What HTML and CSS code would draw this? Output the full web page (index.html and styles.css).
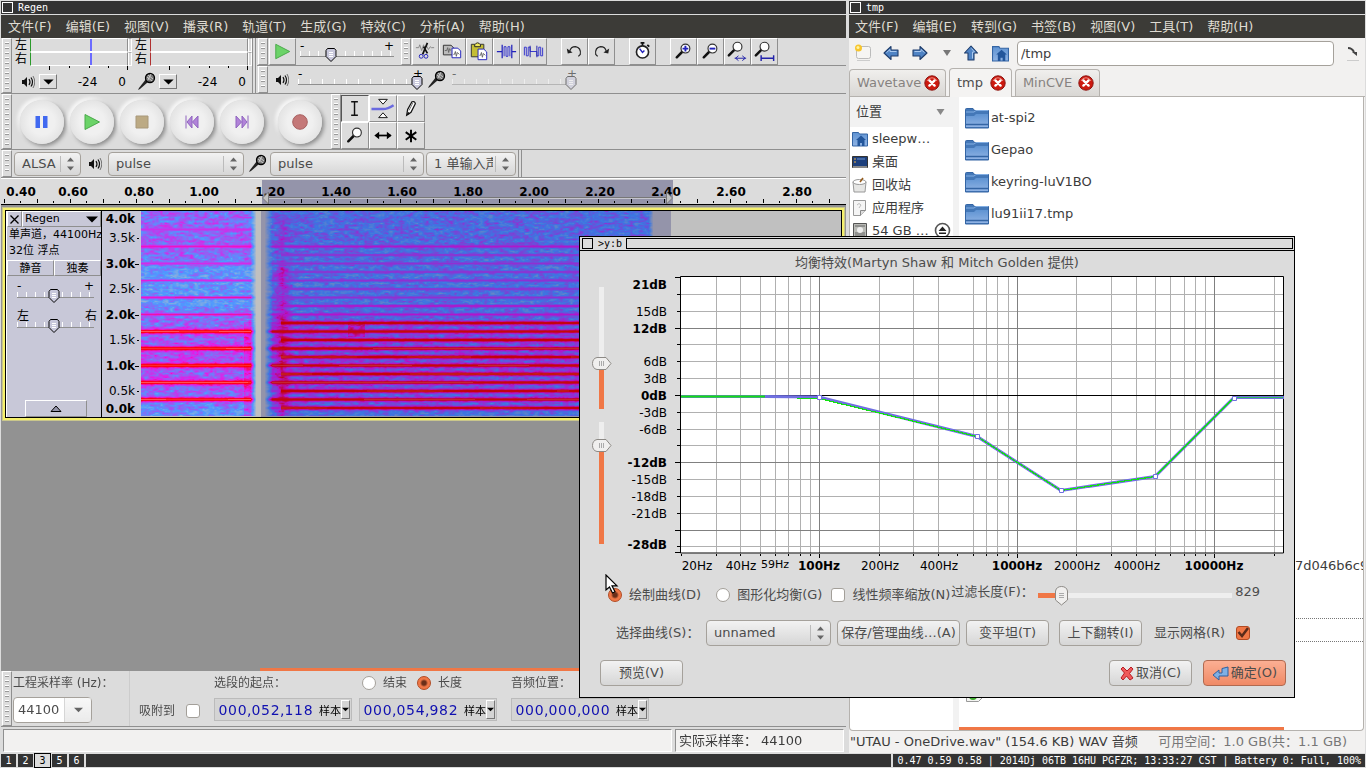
FILE: index.html
```html
<!DOCTYPE html>
<html lang="zh-CN">
<head>
<meta charset="utf-8">
<title>Regen</title>
<link rel="stylesheet" href="styles.css">
</head>
<body>
<svg class="defs" aria-hidden="true">
  <defs>
    <linearGradient id="blue" x1="0" y1="0" x2="0" y2="1"><stop offset="0" stop-color="#5f93d2"/><stop offset="1" stop-color="#8fb3e4"/></linearGradient>
    <symbol id="i-speaker" viewBox="0 0 14 14"><path d="M1 5h2l3-3v10l-3-3H1z" fill="#111"/><path d="M8 4q2 3 0 6M10 2.500q3 4.500 0 9" fill="none" stroke="#111" stroke-width="1.200"/><path d="M12 1q3.500 6 0 12" fill="none" stroke="#555" stroke-width=".8"/></symbol>
    <symbol id="i-mic" viewBox="0 0 20 20"><path d="M2 18l2-1 8-7-2-3-7 9z" fill="#222"/><circle cx="14" cy="6" r="4.500" fill="#777" stroke="#000" stroke-width="1.300"/><path d="M11 5l5 4M12 3l5 4M12 8l3-6" stroke="#ddd" stroke-width=".8"/></symbol>
    <symbol id="i-lens" viewBox="0 0 22 22"><path d="M3 16l6-6" stroke="#111" stroke-width="2.600" stroke-linecap="round"/><circle cx="12" cy="7" r="4.600" fill="#fff" stroke="#333" stroke-width="1.200"/></symbol>
    <symbol id="i-folder" viewBox="0 0 24 21"><path d="M.5 1.500Q.5.500 1.500.5H8l1.500 2H23.500v17.500H.5z" fill="#4478b8" stroke="#3465a4"/><path d="M1 4h8l2-1.500h12" stroke="#82aee3" fill="none"/><path d="M1 8h8l2-2h12v13H1z" fill="url(#blue)"/><path d="M1 16.500h22" stroke="#3465a4" stroke-width="1.500"/></symbol>
    <symbol id="i-home" viewBox="0 0 16 16"><path d="M.5 1.500h6l1 1.500h8v12H.5z" fill="url(#blue)" stroke="#3465a4"/><path d="M4 9l5-4.500L14 9h-1.500v6h-2.500v-3h-2v3H5.500V9z" fill="#23569b"/></symbol>
    <symbol id="i-arrow" viewBox="0 0 16 16"><path d="M1 8l7-6.500V5h7v6H8v3.500z" fill="#4f83c4" stroke="#1f3d6c" stroke-width="1.100" stroke-linejoin="round"/><path d="M3.500 7.500l3.500-3v2h6.500" fill="none" stroke="#a9c8ee"/></symbol>
    <symbol id="i-close" viewBox="0 0 16 16"><circle cx="8" cy="8" r="7.200" fill="#cc1a10" stroke="#8d1410"/><path d="M3 6a5.500 5.500 0 0 1 10 0" fill="none" stroke="#ef8a80"/><path d="M5.400 5.400l5.200 5.200M10.600 5.400l-5.200 5.200" stroke="#fff" stroke-width="2.400" stroke-linecap="round"/></symbol>
    <symbol id="i-down" viewBox="0 0 12 7"><path d="M0 .5h12L6 6.500z" fill="#000"/></symbol>
    <symbol id="i-undo" viewBox="0 0 26 26"><path d="M8 13q1-5 6-5 6 1 5 8l-2 2" fill="none" stroke="#222" stroke-width="1.200"/><path d="M5 10l1 5 5-1z" fill="#222"/></symbol>
  </defs>
</svg>

<div class="desktop">
 <div class="windows">
  <section class="win audacity">
    <header class="titlebar"><i class="box"></i><span>Regen</span></header>
    <nav class="menubar"><a href="#">文件(F)</a><a href="#">编辑(E)</a><a href="#">视图(V)</a><a href="#">播录(R)</a><a href="#">轨道(T)</a><a href="#">生成(G)</a><a href="#">特效(C)</a><a href="#">分析(A)</a><a href="#">帮助(H)</a></nav>

    <div class="dock">
      <div class="meters">
        <i class="grip"></i>
        <div class="meter">
          <div class="channel"><span>左</span><b class="bar out"></b><i class="clip"></i></div>
          <div class="channel"><span>右</span><b class="bar out"></b><i class="clip"></i></div>
          <svg class="scale" viewBox="0 0 120 4"><path d="M37.500 0v4M57.500 0v2M77.500 0v2M96.500 0v2M115.500 0v4" stroke="#000"/></svg>
          <div class="meter-foot"><svg width="14" height="14"><use href="#i-speaker"/></svg><button class="drop" aria-label="播放表"><svg width="11" height="6"><use href="#i-down"/></svg></button><span class="mid">-24</span><span>0</span></div>
        </div>
        <div class="meter">
          <div class="channel"><span>左</span><b class="bar in"></b><i class="clip"></i></div>
          <div class="channel"><span>右</span><b class="bar in"></b><i class="clip"></i></div>
          <svg class="scale" viewBox="0 0 120 4"><path d="M37.500 0v4M57.500 0v2M77.500 0v2M96.500 0v2M115.500 0v4" stroke="#000"/></svg>
          <div class="meter-foot"><svg width="20" height="20"><use href="#i-mic"/></svg><button class="drop" aria-label="录音表"><svg width="11" height="6"><use href="#i-down"/></svg></button><span class="mid">-24</span><span>0</span></div>
        </div>
        <i class="endbar"></i>
      </div>
      <div class="dock-rows">
        <div class="bar-row">
          <i class="grip"></i>
          <button class="tool" aria-label="按速度播放"><svg viewBox="0 0 26 26"><path d="M6 5.500v15L20.500 13z" fill="#6bd368" stroke="#4aa94a"/></svg></button>
          <div class="knob speed"><span class="signs"><i>-</i><i>+</i></span><input type="range" aria-label="播放速度" value="30"></div>
          <i class="grip"></i>
          <button class="tool" aria-label="剪切"><svg viewBox="0 0 26 26"><path d="M3 9h3l1-3 2 6 2-6 1 4 2-3 2 4 2-3 1 1h3" fill="none" stroke="#888"/><path d="M15 4l-5 12M11 8l4 7" stroke="#111" stroke-width="1.800"/><circle cx="8.500" cy="18" r="2" fill="none" stroke="#22b"/><circle cx="13.500" cy="18" r="2" fill="none" stroke="#22b"/></svg></button>
          <button class="tool" aria-label="复制"><svg viewBox="0 0 26 26"><path d="M3.500 6.500h8l3 3v7h-11z" fill="#bbb" stroke="#333"/><path d="M5 12h2l1-3 1 5 1-4 1 2" fill="none" stroke="#666"/><path d="M12.500 9.500h6l3 3v7h-9z" fill="#fff" stroke="#22b"/><path d="M14 16h1l1-3 1 5 1-4 2 2" fill="none" stroke="#666"/></svg></button>
          <button class="tool" aria-label="粘贴"><svg viewBox="0 0 26 26"><path d="M4.500 5.500h13v13h-13z" fill="#c3bd35" stroke="#333"/><path d="M8 6q3-4 6 0v2H8z" fill="#efe75c" stroke="#222"/><path d="M11.500 10.500h6l3 3v8h-9z" fill="#fff" stroke="#22b"/><path d="M13 17h1l1-3 1 5 1-4 2 2" fill="none" stroke="#666"/></svg></button>
          <button class="tool" aria-label="修剪"><svg viewBox="0 0 26 26"><path d="M3 13h5M18 13h5M8.500 6v14M18.500 6v14" stroke="#22b" stroke-width="1.300"/><path d="M10.500 18V8h2v10h2V8h2v10" fill="none" stroke="#33c"/></svg></button>
          <button class="tool" aria-label="静音"><svg viewBox="0 0 26 26"><path d="M3.500 17V8.500h2v9h2v-9h2V13H16.500V17.500h2v-9h2v9h2V9" fill="none" stroke="#33c"/><path d="M9.500 7v12M16.500 7v12" stroke="#22a"/></svg></button>
          <i class="gap"></i>
          <button class="tool" aria-label="撤销"><svg viewBox="0 0 26 26"><use href="#i-undo"/></svg></button>
          <button class="tool" aria-label="重做"><svg viewBox="0 0 26 26" class="flip"><use href="#i-undo"/></svg></button>
          <i class="gap"></i>
          <button class="tool" aria-label="定时"><svg viewBox="0 0 26 26"><path d="M11 4h4M13 4v4M18 6l2 2" stroke="#111" stroke-width="1.800"/><circle cx="13" cy="13.500" r="6.300" fill="#fff" stroke="#222" stroke-width="1.700"/><path d="M10 10l3 4 2-2" fill="none" stroke="#22b" stroke-width="1.500"/></svg></button>
          <i class="gap"></i>
          <button class="tool" aria-label="放大"><svg viewBox="0 0 26 26"><use href="#i-lens" x="3" y="3" width="22" height="22"/><path d="M12 10h6M15 7v6" stroke="#22b" stroke-width="2"/></svg></button>
          <button class="tool" aria-label="缩小"><svg viewBox="0 0 26 26"><use href="#i-lens" x="3" y="3" width="22" height="22"/><path d="M12 10h6" stroke="#22b" stroke-width="2"/></svg></button>
          <button class="tool" aria-label="适应选区"><svg viewBox="0 0 26 26"><use href="#i-lens" x="1" y="1" width="22" height="22"/><path d="M10 20h12M14 17.500l-3 2.500 3 2.500M18 17.500l3 2.500-3 2.500" fill="none" stroke="#22a"/></svg></button>
          <button class="tool" aria-label="适应项目"><svg viewBox="0 0 26 26"><use href="#i-lens" x="1" y="1" width="22" height="22"/><path d="M10 20h12M9.500 17v6M22.500 17v6" stroke="#22a" stroke-width="1.500"/></svg></button>
        </div>
        <div class="bar-row mixer">
          <i class="grip"></i>
          <svg width="14" height="14"><use href="#i-speaker"/></svg>
          <div class="knob wide"><span class="signs"><i>-</i><i>+</i></span><input type="range" aria-label="输出音量" value="100"></div>
          <svg width="20" height="20"><use href="#i-mic"/></svg>
          <div class="knob wide off"><span class="signs"><i>-</i><i>+</i></span><input type="range" aria-label="输入音量" value="100" disabled></div>
        </div>
      </div>
    </div>

    <div class="bar-row transport">
      <i class="grip"></i>
      <div class="rounds">
        <button class="round" aria-label="暂停"><svg viewBox="0 0 16 16"><path d="M1.500 2h4.500v12H1.500zM9 2h4.500v12H9z" fill="#4169f0"/></svg></button>
        <button class="round" aria-label="播放"><svg viewBox="0 0 16 16"><path d="M1 .5v15L15.500 8z" fill="#6bd368" stroke="#4aa94a"/></svg></button>
        <button class="round" aria-label="停止"><svg viewBox="0 0 16 16"><path d="M2 2h12v12H2z" fill="#bcaa84" stroke="#a8987a"/></svg></button>
        <button class="round" aria-label="开头"><svg viewBox="0 0 16 16"><path d="M2 1.500v13M8 2v12L3 8zM14 2v12L8.500 8z" fill="#b183d8" stroke="#9065c0"/></svg></button>
        <button class="round" aria-label="结尾"><svg viewBox="0 0 16 16"><path d="M14 1.500v13M8 2v12l5-6zM2 2v12l5.500-6z" fill="#b183d8" stroke="#9065c0"/></svg></button>
        <button class="round rec" aria-label="录音"><svg viewBox="0 0 16 16"><circle cx="8" cy="8" r="7.300" fill="#c47878" stroke="#a86060"/></svg></button>
      </div>
      <i class="grip"></i>
      <div class="tools">
        <button class="tool on" aria-label="选择"><svg viewBox="0 0 26 26"><path d="M9 6h7M9 20h7M12.500 6v14" stroke="#111" stroke-width="1.500"/></svg></button>
        <button class="tool" aria-label="包络"><svg viewBox="0 0 26 26"><path d="M1 13.500h12q5 0 11-4" fill="none" stroke="#6a6ae0" stroke-width="2.500"/><path d="M8.500 3.500h9l-4.500 5zM8.500 22.500h9l-4.500-5z" fill="#fff" stroke="#111"/></svg></button>
        <button class="tool" aria-label="绘制"><svg viewBox="0 0 26 26"><path d="M8.500 20l1-6 4.500-8q3-1 3.500 2L13 17z" fill="#fff" stroke="#111" stroke-width="1.300"/><path d="M8 20.500l2-4 2 2z" fill="#111"/><path d="M15 7l-4 8" stroke="#777"/></svg></button>
        <button class="tool" aria-label="缩放"><svg viewBox="0 0 26 26"><use href="#i-lens" x="3" y="3" width="22" height="22"/></svg></button>
        <button class="tool" aria-label="时间移动"><svg viewBox="0 0 26 26"><path d="M6 13h15" stroke="#000" stroke-width="1.800"/><path d="M9 9v8l-5-4zM17 9v8l5-4z" fill="#000"/></svg></button>
        <button class="tool" aria-label="多用途"><svg viewBox="0 0 26 26"><path d="M13 7v13M7.500 9.500l11 8M18.500 9.500l-11 8" stroke="#000" stroke-width="2"/></svg></button>
      </div>
    </div>

    <div class="bar-row devices">
      <i class="grip"></i>
      <select class="sel host" aria-label="音频主机"><option>ALSA</option></select>
      <svg width="14" height="14"><use href="#i-speaker"/></svg>
      <select class="sel outdev" aria-label="输出设备"><option>pulse</option></select>
      <svg class="micro" width="20" height="20"><use href="#i-mic"/></svg>
      <select class="sel indev" aria-label="输入设备"><option>pulse</option></select>
      <select class="sel chans" aria-label="输入声道"><option>1 单输入声道</option></select>
      <i class="endbar"></i>
    </div>

    <div class="timeline">
      <svg width="840" height="26" viewBox="2 179 840 26">
        <path d="M262 180h411v25H262z" fill="#9494aa"/>
        <path d="M264 198.500h402" stroke="#c4c4cc"/><path d="M264 197.500h402" stroke="#777"/>
        <path id="minor" class="tk"/><path id="major" class="tk"/>
        <g class="tl"><text x="21" y="196">0.40</text><text x="73" y="196">0.60</text><text x="139" y="196">0.80</text><text x="204" y="196">1.00</text><text x="270" y="196">1.20</text><text x="336" y="196">1.40</text><text x="402" y="196">1.60</text><text x="468" y="196">1.80</text><text x="534" y="196">2.00</text><text x="600" y="196">2.20</text><text x="666" y="196">2.40</text><text x="731" y="196">2.60</text><text x="797" y="196">2.80</text></g>
        <path d="M268.500 192v12l-6-6zM666.500 192v12l6-6z" fill="#c0c0c0" stroke="#777"/>
      </svg>
    </div>

    <div class="tracks">
      <div class="track">
        <div class="panel">
          <div class="panel-head"><button aria-label="关闭轨道"><svg width="9" height="9" viewBox="0 0 9 9"><path d="M.5.500l8 8M8.500.500l-8 8" stroke="#000" stroke-width="1.300"/></svg></button><button class="name"><span>Regen</span><svg width="12" height="7"><use href="#i-down"/></svg></button></div>
          <p>单声道，44100Hz</p><p>32位 浮点</p>
          <div class="pair"><button>静音</button><button>独奏</button></div>
          <div class="knob track-knob"><span class="signs"><i>-</i><i>+</i></span><input type="range" aria-label="增益" value="48"></div>
          <div class="knob track-knob pan"><span class="signs"><i>左</i><i>右</i></span><input type="range" aria-label="声像" value="48"></div>
          <button class="collapse" aria-label="折叠"><svg width="12" height="7" viewBox="0 0 12 7"><path d="M1 6.500L6 1l5 5.500z" fill="#9494aa" stroke="#000"/></svg></button>
        </div>
        <svg class="freq" width="39" height="206" viewBox="102 211 39 206">
          <g class="fb"><text x="135" y="223">4.0k</text><text x="135" y="268">3.0k</text><text x="135" y="319">2.0k</text><text x="135" y="370">1.0k</text><text x="135" y="413">0.0k</text></g>
          <g class="fr"><text x="135" y="242">3.5k</text><text x="135" y="293">2.5k</text><text x="135" y="344">1.5k</text><text x="135" y="395">0.5k</text></g>
          <path class="tk" d="M137 238.500h2M135 264.500h4M137 289.500h2M135 315.500h4M137 340.500h2M135 366.500h4M137 391.500h2"/>
        </svg>
        <div class="wave"><canvas id="spectrum" width="530" height="206"></canvas></div>
      </div>
      <i class="hscroll"></i>
    </div>

    <div class="selection-bar">
      <i class="grip"></i>
      <div class="rate"><label for="rate">工程采样率 (Hz)：</label><div class="combo"><input id="rate" value="44100"><button aria-label="选择采样率"><svg width="9" height="6"><use href="#i-down"/></svg></button></div></div>
      <label class="snap">吸附到<input type="checkbox"></label>
      <div class="tcol"><span>选段的起点：</span><div class="time" data-v="000,052,118"></div></div>
      <div class="tcol"><span class="radios"><label><input type="radio" name="len">结束</label><label><input type="radio" name="len" checked>长度</label></span><div class="time" data-v="000,054,982"></div></div>
      <div class="tcol last"><span>音频位置：</span><div class="time" data-v="000,000,000"></div></div>
    </div>
    <footer class="status"><span class="cell"></span><span class="cell rate-cell">实际采样率： 44100</span></footer>
  </section>

  <section class="win files">
    <header class="titlebar"><i class="box"></i><span>tmp</span></header>
    <nav class="menubar"><a href="#">文件(F)</a><a href="#">编辑(E)</a><a href="#">转到(G)</a><a href="#">书签(B)</a><a href="#">视图(V)</a><a href="#">工具(T)</a><a href="#">帮助(H)</a></nav>
    <div class="fm-bar">
      <button aria-label="新标签"><svg width="18" height="18" viewBox="0 0 18 18"><rect x="2.500" y="2.500" width="14" height="12" rx="2" fill="#f6f5f3" stroke="#bbb"/><path d="M3 16.500h13" stroke="#ccc"/><circle cx="4.500" cy="4" r="3.500" fill="#f7c52d"/><circle cx="4" cy="3.500" r="1.500" fill="#fff3a0"/></svg></button>
      <button aria-label="后退"><svg width="16" height="16"><use href="#i-arrow"/></svg></button>
      <button aria-label="前进"><svg width="16" height="16" class="flip"><use href="#i-arrow"/></svg></button>
      <button class="tiny" aria-label="历史"><svg width="8" height="6" viewBox="0 0 8 6"><path d="M0 0h8L4 6z" fill="#777"/></svg></button>
      <button aria-label="向上"><svg width="16" height="16" class="up"><use href="#i-arrow"/></svg></button>
      <button aria-label="主目录"><svg width="17" height="17"><use href="#i-home"/></svg></button>
      <input class="path" aria-label="路径" value="/tmp">
      <button aria-label="跳转"><svg width="14" height="16" viewBox="0 0 14 16"><path d="M2 3q4 0 6 4" fill="none" stroke="#444" stroke-width="2"/><path d="M6 7h5v4z" fill="#444"/><path d="M1 15.500h12" stroke="#ccc"/></svg></button>
    </div>
    <div class="tabs">
      <div class="tab t1"><span>Wavetave</span><button aria-label="关闭"><svg width="16" height="16"><use href="#i-close"/></svg></button></div>
      <div class="tab t2 current"><span>tmp</span><button aria-label="关闭"><svg width="16" height="16"><use href="#i-close"/></svg></button></div>
      <div class="tab t3"><span>MinCVE</span><button aria-label="关闭"><svg width="16" height="16"><use href="#i-close"/></svg></button></div>
    </div>
    <div class="fm-body">
      <aside>
        <div class="side-head">位置<svg width="9" height="6" viewBox="0 0 8 6"><path d="M0 0h8L4 6z" fill="#888"/></svg></div>
        <ul>
          <li><svg width="16" height="16"><use href="#i-home"/></svg>sleepw…</li>
          <li><svg width="16" height="16" viewBox="0 0 16 16"><path d="M.5 2.500h15v11H.5z" fill="#1d3f7c" stroke="#333"/><path d="M2 5h2M2 8h2" stroke="#e8b04b"/><path d="M5 5h8" stroke="#6d94cf"/><path d="M1 13h14" stroke="#888" stroke-width="2"/></svg>桌面</li>
          <li><svg width="16" height="16" viewBox="0 0 16 16"><path d="M1 5h13l-1 10H2z" fill="#e6e6e4" stroke="#999"/><ellipse cx="7.500" cy="5" rx="6.500" ry="2.500" fill="#fff" stroke="#999"/><path d="M8 5l3-4" stroke="#955c1c" stroke-width="1.500"/></svg>回收站</li>
          <li><svg width="16" height="16" viewBox="0 0 16 16"><path d="M1.500.500h12v10l-5 5h-7z" fill="#f5f5f5" stroke="#999"/><path d="M13.500 10.500h-5v5" fill="#ddd" stroke="#888"/><path d="M5 5q2-3 4 0l-2 3" fill="none" stroke="#bbb"/></svg>应用程序</li>
          <li><svg width="16" height="16" viewBox="0 0 16 16"><path d="M1.500.500h13v15h-13z" fill="#b9bab6" stroke="#555"/><path d="M3 3h10M3 10h10M3 12h10" stroke="#666"/><circle cx="8" cy="7" r="3" fill="#eee"/></svg>54 GB …<svg class="eject" width="17" height="17" viewBox="0 0 17 17"><circle cx="8.500" cy="8.500" r="7" fill="#fff" stroke="#555" stroke-width="1.600"/><path d="M4.500 9h8l-4-4.500zM5 10.500h7v1.500H5z" fill="#222"/></svg></li>
        </ul>
      </aside>
      <div class="list">
        <div class="item"><svg width="24" height="21"><use href="#i-folder"/></svg>at-spi2</div>
        <div class="item"><svg width="24" height="21"><use href="#i-folder"/></svg>Gepao</div>
        <div class="item"><svg width="24" height="21"><use href="#i-folder"/></svg>keyring-luV1BO</div>
        <div class="item"><svg width="24" height="21"><use href="#i-folder"/></svg>lu91ii17.tmp</div>
        <div class="item long"><span>7d046b6c9</span></div>
        <div class="picked"></div>
        <div class="item audio"><svg width="20" height="22" viewBox="0 0 20 22"><path d="M1.500.500h17v16l-5 5h-12z" fill="#f4f4f2" stroke="#999"/><circle cx="8" cy="16" r="4" fill="#3fae2f"/><path d="M11 16V4" stroke="#3fae2f" stroke-width="2"/></svg><span>音频素材列表 全部文件</span></div>
        <i class="fm-scroll"></i>
      </div>
    </div>
    <footer class="fm-status"><span>"UTAU - OneDrive.wav" (154.6 KB) WAV 音频</span><span class="free">可用空间：1.0 GB(共：1.1 GB)</span></footer>
  </section>

  <section class="dialog" role="dialog" aria-label="均衡特效">
    <header class="dlg-title"><i class="box"></i><span>&gt;y:b</span><i class="rest"></i></header>
    <h1>均衡特效(Martyn Shaw 和 Mitch Golden 提供)</h1>
    <div class="eq">
      <div class="vsliders"><input type="range" class="v s1" aria-label="上限" value="36"><input type="range" class="v s2" aria-label="下限" value="84"></div>
      <svg class="graph" width="664" height="302" viewBox="625 274 664 302">
        <path d="M680.500 276.500h603v277h-603z" fill="#fff"/>
        <path class="g1" d="M681 294.500h602M681 311.500h602M681 344.500h602M681 361.500h602M681 378.500h602M681 412.500h602M681 429.500h602M681 445.500h602M681 479.500h602M681 496.500h602M681 513.500h602M681 546.500h602M716.500 277v276M740.500 277v276M760.500 277v276M775.500 277v276M788.500 277v276M800.500 277v276M810.500 277v276M879.500 277v276M913.500 277v276M938.500 277v276M973.500 277v276M986.500 277v276M997.500 277v276M1008.500 277v276M1076.500 277v276M1111.500 277v276M1136.500 277v276M1155.500 277v276M1170.500 277v276M1184.500 277v276M1195.500 277v276M1205.500 277v276M1274.500 277v276"/>
        <path class="g2" d="M681 328.500h602M681 462.500h602M681 530.500h602M819.500 277v276M1017.500 277v276M1214.500 277v276"/>
        <path class="tk" d="M681 395.500h602M680.500 276.500h603v276.500h-603zM675 277.500h5M677 294.500h3M677 311.500h3M675 328.500h5M677 344.500h3M677 361.500h3M677 378.500h3M675 395.500h5M677 412.500h3M677 429.500h3M677 445.500h3M675 462.500h5M677 479.500h3M677 496.500h3M677 513.500h3M675 530.500h5M677 546.500h3M675 552.500h5M681.500 554v2M716.500 554v2M740.500 554v2M760.500 554v2M775.500 554v2M788.500 554v2M800.500 554v2M810.500 554v2M819.500 554v4M879.500 554v2M913.500 554v2M938.500 554v2M957.500 554v2M973.500 554v2M986.500 554v2M997.500 554v2M1008.500 554v2M1017.500 554v4M1076.500 554v2M1111.500 554v2M1136.500 554v2M1155.500 554v2M1170.500 554v2M1184.500 554v2M1195.500 554v2M1205.500 554v2M1214.500 554v4M1274.500 554v2"/>
        <path d="M681 396.500h84l54 .5 158 39.500 84 54 94-14 79-79h50" fill="none" stroke="#7070e0" stroke-width="3"/>
        <path d="M681 396.500h84" stroke="#12e012" stroke-width="2"/>
        <path d="M797 398.500h22l158 38 84 54 94-14 79-79" fill="none" stroke="#12e012" stroke-width="1.200" shape-rendering="crispEdges"/>
        <path d="M1234 397.500h49" stroke="#30c060"/>
        <path d="M817.500 395.500h4v4h-4zM975.500 434.500h4v4h-4zM1059.500 488.500h4v4h-4zM1153.500 474.500h4v4h-4zM1232.500 396.500h4v4h-4z" fill="#fff" stroke="#7070e0"/>
        <g class="fb"><text x="667" y="289">21dB</text><text x="667" y="333">12dB</text><text x="667" y="400">0dB</text><text x="667" y="467">-12dB</text><text x="667" y="549">-28dB</text></g>
        <g class="fr"><text x="667" y="316">15dB</text><text x="667" y="366">6dB</text><text x="667" y="383">3dB</text><text x="667" y="417">-3dB</text><text x="667" y="434">-6dB</text><text x="667" y="484">-15dB</text><text x="667" y="501">-18dB</text><text x="667" y="518">-21dB</text></g>
        <g class="hz"><text x="697" y="570">20Hz</text><text x="741" y="570">40Hz</text><text x="775" y="568" class="small">59Hz</text><text x="880" y="570">200Hz</text><text x="939" y="570">400Hz</text><text x="1077" y="570">2000Hz</text><text x="1137" y="570">4000Hz</text></g>
        <g class="tl"><text x="819" y="570">100Hz</text><text x="1017" y="570">1000Hz</text><text x="1214" y="570">10000Hz</text></g>
      </svg>
    </div>
    <div class="row modes">
      <label><input type="radio" name="mode" checked>绘制曲线(D)</label>
      <label><input type="radio" name="mode">图形化均衡(G)</label>
      <label><input type="checkbox">线性频率缩放(N)</label>
      <label class="filter" for="flen">过滤长度(F)：</label>
      <input type="range" id="flen" class="h" value="9"><output for="flen">829</output>
    </div>
    <div class="row curves">
      <label for="curve">选择曲线(S)：</label>
      <select id="curve" class="sel"><option>unnamed</option></select>
      <button class="btn save">保存/管理曲线…(A)</button>
      <button class="btn">变平坦(T)</button>
      <button class="btn flipb">上下翻转(I)</button>
      <label class="grid-lab">显示网格(R)<input type="checkbox" checked></label>
    </div>
    <div class="row actions">
      <button class="btn">预览(V)</button>
      <button class="btn cancel"><svg width="14" height="16" viewBox="0 0 14 16"><path d="M3 2l4 4 4-4 2 2-3.500 4.500L13 13l-3 2-3.500-4L3 15l-2-2 3.500-5L1 4z" fill="#ef5a5a" stroke="#b81c24"/></svg>取消(C)</button>
      <button class="btn ok"><svg width="17" height="15" viewBox="0 0 17 15"><path d="M1 9l6-5v3h3V2.500L16 1v9H7v4z" fill="#7fb0e4" stroke="#2f5f9f"/></svg>确定(O)</button>
    </div>
    <svg class="pointer" width="14" height="20" viewBox="0 0 14 20"><path d="M1 1v15l3.500-3 3 6 2.500-1.200-3-6H12z" fill="#fff" stroke="#000" stroke-width="1.200"/></svg>
  </section>
 </div>

 <footer class="taskbar">
   <span class="ws">1</span><span class="ws">2</span><span class="ws active">3</span><span class="ws">5</span><span class="ws">6</span>
   <span class="fill"></span>
   <span class="info">0.47 0.59 0.58 | 2014Dj 06TB 16HU PGFZR; 13:33:27 CST | Battery 0: Full, 100%</span>
 </footer>
</div>
<script src="app.js"></script>
</body>
</html>
```

FILE: styles.css
```css
* { box-sizing: border-box; }
body { margin: 0; font: 13px/16px "DejaVu Sans", "Noto Sans CJK SC", sans-serif; color: #3c3c3c; background: #dcdcdc; overflow: hidden; }
button, input, select { font: inherit; color: inherit; margin: 0; padding: 0; border: 0; background: none; outline: none; }
svg { display: block; flex: none; }
i { font-style: normal; }
p, ul, h1 { margin: 0; padding: 0; }
a { color: inherit; text-decoration: none; }
.defs { position: absolute; width: 0; height: 0; }
.flip { transform: scaleX(-1); }
.up { transform: rotate(90deg); }

.desktop { height: 100vh; display: flex; flex-direction: column; }
.windows { flex: 1; min-height: 0; display: flex; position: relative; }
.win { display: flex; flex-direction: column; min-width: 0; overflow: hidden; }
.audacity { flex: 0 0 62%; border-left: 1px solid #dcdcdc; border-right: 1px solid #dcdcdc; background: #dcdcdc; }
.files { flex: 1; background: #f2f1f0; border-left: 2px solid #dcdcdc; border-right: 1px solid #dcdcdc; }

.titlebar { flex: none; height: 15px; background: #333; border-top: 1px solid #dcdcdc; border-bottom: 1px solid #dcdcdc; display: flex; align-items: center; gap: 5px; padding-left: 1px; color: #fff; font: 10px/13px "DejaVu Sans Mono", monospace; }
.box { width: 11px; height: 11px; border: 1px solid currentColor; flex: none; }
.menubar { flex: none; height: 23px; background: #3c3b37; color: #dfdbd2; display: flex; align-items: center; gap: 14px; padding-left: 7px; white-space: nowrap; }
.files .menubar { padding-left: 6px; }

.grip { width: 10px; flex: none; align-self: stretch; margin-left: 1px; border: 1px solid; border-color: #fff #8f8f8f #8f8f8f #fff; background: repeating-linear-gradient(#fff 0 1px, #999 1px 2px, transparent 2px 5px) 2px 3px / 4px calc(100% - 6px) no-repeat; }
.endbar { width: 4px; align-self: stretch; border: solid #8f8f8f; border-width: 0 1px; flex: none; }
.gap { width: 14px; flex: none; }
.dock { flex: none; height: 56px; display: flex; }
.meters { width: 256px; flex: none; display: flex; border-bottom: 1px solid #8f8f8f; }
.meter { width: 120px; flex: none; color: #000; display: flex; flex-direction: column; }
.channel { height: 14px; display: flex; font-size: 12px; line-height: 14px; padding-left: 3px; }
.channel span { width: 15px; flex: none; }
.bar { width: 98px; height: 14px; border: 1px solid #fff; border-left: 1px solid #2a9a2a; border-right-color: #8f8f8f; }
.bar.out { background: linear-gradient(#6b6bff, #6b6bff) 59px 0 / 2px 100% no-repeat; }
.bar.in { border-left-color: #b03030; }
.clip { width: 4px; height: 14px; border: 1px solid #fff; border-top-color: #aaa; }
.scale { width: 120px; height: 4px; }
.meter-foot { flex: 1; display: flex; align-items: center; padding: 0 6px 0 10px; gap: 4px; font-size: 12px; }
.meter-foot > svg { margin-left: -1px; }
.meter-foot > svg[width="20"] { margin: 0 -1px 0 -6px; }
.meter-foot .mid { margin-left: auto; margin-right: 17px; }
.drop { width: 18px; height: 15px; border: 1px solid; border-color: #fff #777 #777 #fff; display: grid; place-items: center; }
.dock-rows { flex: 1; min-width: 0; }
.bar-row { display: flex; align-items: center; border-bottom: 1px solid #8f8f8f; height: 28px; }
.tool { width: 27px; height: 27px; flex: none; border: 1px solid; border-color: #fff #8f8f8f #8f8f8f #fff; }
.tool svg { width: 100%; height: 100%; }
.tool.on { border-color: #555 #fff #fff #555; }
.grip + .tool { margin-left: 1px; }

.knob { flex: none; display: flex; flex-direction: column; }
.signs { display: flex; justify-content: space-between; height: 6px; line-height: 9px; font-size: 12px; color: #000; }
.knob input { appearance: none; width: 100%; height: 14px; background: linear-gradient(#8f8f8f, #8f8f8f) 0 8px / 100% 1px no-repeat, repeating-linear-gradient(90deg, #fff 0 1px, transparent 1px 9px) 0 3px / 100% 5px no-repeat; }
.knob input::-webkit-slider-thumb { appearance: none; width: 12px; height: 14px; background: url("data:image/svg+xml,%3Csvg xmlns='http://www.w3.org/2000/svg' width='12' height='14'%3E%3Cpath d='M2.500.5h7l1.500 2v6L6 13.500 1 8.500v-6z' fill='%23c8c8dc' stroke='%23000'/%3E%3Cpath d='M4 4.500h4M4 6.500h4M4 8.500h4' stroke='%23fff'/%3E%3C/svg%3E") no-repeat; }
.speed { width: 94px; margin: 0 6px 0 4px; }
.wide { width: 125px; }
.wide input { background: linear-gradient(#8f8f8f, #8f8f8f) 0 8px / 118px 1px no-repeat, repeating-linear-gradient(90deg, #fff 0 1px, transparent 1px 12px) 0 3px / 118px 5px no-repeat; }
.mixer > svg { margin: 0 9px 0 7px; }
.mixer > svg + .knob + svg { margin: 0 6px 0 3px; }
.off { opacity: .5; }

.transport { height: 56px; }
.rounds { display: flex; gap: 6px; padding: 0 8px 0 8px; }
.round { width: 44px; height: 44px; border-radius: 50%; background: radial-gradient(#f0f0f0 40%, #e2e2e2 75%); box-shadow: 2px 2px 4px #888, -2px -2px 4px #fff; display: grid; place-items: center; }
.round svg { width: 16px; height: 16px; }
.round.rec { margin-left: 8px; }
.tools { display: grid; grid-template-columns: repeat(3, 28px); }
.tools .tool { width: 28px; margin: 0; }

.sel { appearance: none; height: 24px; border: 1px solid #a5a19b; border-radius: 4px; padding: 0 22px 0 7px; color: #4c4c4c; background: url("data:image/svg+xml,%3Csvg xmlns='http://www.w3.org/2000/svg' width='20' height='16'%3E%3Cpath d='M.5 0v16' stroke='%23bbb'/%3E%3Cpath d='M7 5.500h7L10.500 1.500zM7 10.500h7l-3.500 4z' fill='%23666'/%3E%3C/svg%3E") right 0 center no-repeat, linear-gradient(#f2f2f2, #d6d6d6); text-overflow: clip; overflow: hidden; }
.devices { height: 28px; }
.devices > * { flex: none; }
.host { width: 67px; margin: 0 7px 0 2px; }
.outdev { width: 136px; margin: 0 3px 0 6px; }
.indev { width: 154px; margin: 0 2px 0 3px; }
.chans { width: 90px; margin-right: 2px; }

.timeline { flex: none; height: 27px; padding-left: 1px; border-top: 1px solid #fff; border-bottom: 1px solid #000; overflow: hidden; }
.tk { stroke: #000; fill: none; }
.g1 { stroke: #b0b0b0; fill: none; }
.g2 { stroke: #808080; fill: none; }
.tl { font-size: 12px; font-weight: bold; text-anchor: middle; fill: #000; }
.fb { font-size: 12px; font-weight: bold; text-anchor: end; fill: #000; }
.fr { font-size: 12px; text-anchor: end; fill: #000; }
.hz { font-size: 12px; text-anchor: middle; fill: #000; }
.hz .small { font-size: 11px; }

.tracks { flex: 1; min-height: 0; background: #929292; display: flex; flex-direction: column; padding: 3px 2px 0 2px; }
.track { flex: none; height: 212px; display: flex; border: 2px solid #f5f06c; outline: 1px solid #c9c68b; padding: 1px; background: #000; }
.panel { width: 95px; flex: none; background: #c8c8d8; color: #000; font-size: 12px; display: flex; flex-direction: column; border-left: 1px solid #fff; white-space: nowrap; }
.panel button { border: 1px solid; border-color: #fff #8f8f8f #8f8f8f #fff; }
.panel-head { display: flex; height: 16px; }
.panel-head button:first-child { width: 15px; display: grid; place-items: center; }
.panel .name { flex: 1; display: flex; justify-content: space-between; align-items: center; padding: 0 2px; font-size: 11px; }
.panel p { line-height: 16px; padding-left: 2px; font-size: 11px; overflow: hidden; }
.pair { display: grid; grid-template-columns: 1fr 1fr; height: 16px; line-height: 13px; margin: 1px 0 8px; font-size: 11px; }
.track-knob { width: 77px; margin-left: 10px; }
.track-knob .signs { height: 5px; line-height: 4px; }
.track-knob.pan { margin-top: 9px; }
.track-knob.pan .signs { line-height: 8px; height: 7px; margin-right: -3px; }
.collapse { width: 62px; margin: auto auto 0 18px; height: 17px; display: grid; place-items: center; }
.freq { background: #c8c8d8; margin-left: 1px; }
.wave { flex: 1; min-width: 0; background: #c0c0c0; overflow: hidden; }
.wave canvas { display: block; }
.hscroll { margin: auto 0 0 257px; height: 3px; background: #f07746; }

.selection-bar { flex: none; height: 56px; display: flex; color: #4c4c4c; font-size: 12px; border-bottom: 1px solid #8f8f8f; white-space: nowrap; }
.rate { width: 118px; padding: 4px 0 0 1px; border-right: 1px solid #ccc; }
.combo { display: flex; width: 79px; height: 26px; margin-top: 6px; border: 1px solid #a5a19b; border-radius: 4px; background: #fff; font-size: 13px; }
.combo input { width: 50px; padding-left: 4px; }
.combo button { flex: 1; border-left: 1px solid #bbb; background: linear-gradient(#f4f4f4, #dedede); display: grid; place-items: center; opacity: .6; }
.snap { width: 84px; padding: 24px 14px 0 9px; display: flex; justify-content: space-between; align-items: center; }
.tcol { width: 145px; padding-top: 4px; line-height: 16px; }
.tcol.last { margin-left: 7px; }
.tcol > span { display: flex; height: 16px; }
.radios { gap: 10px; padding-left: 3px; }
.radios label { display: flex; align-items: center; gap: 7px; }
input[type=radio], input[type=checkbox] { appearance: none; width: 14px; height: 14px; flex: none; border: 1px solid #a39f99; background: #fff; border-radius: 3px; }
input[type=radio] { border-radius: 50%; }
input[type=radio]:checked { border-color: #b24a22; background: radial-gradient(circle, #6b2f19 0 2px, #f07746 4px); }
input[type=checkbox]:checked { border-color: #b24a22; background: url("data:image/svg+xml,%3Csvg xmlns='http://www.w3.org/2000/svg' width='14' height='14'%3E%3Cpath d='M2.500 6l3.500 4 6-8' fill='none' stroke='%235b2b1a' stroke-width='2.500'/%3E%3C/svg%3E") center no-repeat, #f07746; }
.time { width: 138px; height: 23px; margin-top: 7px; border: 1px solid #bbb; background: #d4d4d4; display: flex; align-items: center; padding: 0 1px 0 3px; color: #1010b0; font-size: 14px; }
.time b { font-weight: normal; width: 10px; text-align: center; }
.time b.sep { width: 4px; }
.time em { font: 11px/16px "Noto Sans CJK SC", sans-serif; color: #000; margin-left: 6px; }
.time button { margin-left: auto; width: 9px; height: 19px; border: 1px solid; border-color: #fff #777 #777 #fff; }
.time button svg { width: 7px; height: 5px; }
.status { flex: none; height: 26px; display: flex; gap: 3px; padding: 2px 2px 1px; }
.cell { flex: 1; background: #f2f1f0; border: 1px solid; border-color: #8f8f8f #fff #fff #8f8f8f; line-height: 21px; padding-left: 3px; }
.rate-cell { flex: 0 0 169px; color: #3c3c3c; }

.fm-bar { flex: none; height: 30px; display: flex; align-items: center; padding: 0 4px 0 5px; gap: 12px; }
.fm-bar button { width: 17px; flex: none; display: grid; place-items: center; }
.fm-bar .tiny { width: 12px; margin-right: -2px; }
.fm-bar .path { flex: 1; min-width: 0; height: 25px; background: #fff; border: 1px solid #a5a19b; border-radius: 4px; padding-left: 3px; margin: 0 -2px 0 -4px; }
.tabs { flex: none; height: 29px; display: flex; align-items: flex-end; gap: 3px; border-bottom: 1px solid #b5b2ae; }
.tab { height: 27px; display: flex; align-items: center; justify-content: space-between; padding: 0 5px 0 7px; border: 1px solid #b5b2ae; border-bottom: 0; border-radius: 4px 4px 0 0; background: linear-gradient(#f0efed, #d9d7d4); color: #868280; }
.tab button { width: 16px; height: 16px; }
.t1 { width: 97px; } .t2 { width: 63px; } .t3 { width: 85px; }
.tab.current { height: 29px; margin-bottom: -1px; background: #f4f3f2; color: #4c4c4c; }
.fm-body { flex: 1; min-height: 0; display: flex; background: #fff; border: 1px solid #b5b2ae; border-top: 0; border-radius: 0 0 4px 4px; margin-right: 1px; }
aside { width: 109px; flex: none; border-right: 6px solid #f2f2f2; }
.side-head { height: 30px; background: #f2f2f2; display: flex; align-items: center; justify-content: space-between; padding: 0 8px 0 6px; }
aside ul { list-style: none; }
aside li { height: 23px; display: flex; align-items: center; gap: 4px; padding-left: 2px; white-space: nowrap; }
aside .eject { margin-left: auto; margin-right: 2px; }
.list { flex: 1; min-width: 0; display: flex; flex-direction: column; padding-top: 5px; overflow: hidden; }
.item { height: 32px; flex: none; display: flex; align-items: center; gap: 2px; padding-left: 6px; white-space: nowrap; overflow: hidden; }
.item.long { margin-top: 320px; padding-left: 336px; }
.picked { flex: none; height: 24px; margin-top: 36px; border: 1px dotted #777; border-right: 0; }
.item.audio { margin-top: 38px; align-items: flex-start; }
.item.audio span { line-height: 12px; }
.fm-scroll { margin: auto 79px 0 0; height: 3px; background: #f07746; }
.fm-status { flex: none; height: 22px; display: flex; justify-content: space-between; align-items: center; padding: 0 18px 0 1px; white-space: nowrap; }
.free { color: #777; }

.dialog { position: absolute; left: 579px; top: 236px; width: 716px; height: 462px; background: #dcdcdc; border: 1px solid #000; color: #4c4c4c; }
.dlg-title { height: 14px; border-bottom: 1px solid #000; display: flex; align-items: center; gap: 5px; padding: 0 1px 0 2px; color: #000; font: 10px/12px "DejaVu Sans Mono", monospace; }
.dlg-title .rest { flex: 1; height: 11px; border: 1px solid #000; margin-left: -1px; }
.dialog h1 { font-size: 13px; font-weight: normal; line-height: 16px; text-align: center; margin: 4px 0 3px; }
.eq { display: flex; }
.vsliders { width: 45px; padding: 13px 0 0 11px; display: flex; flex-direction: column; gap: 13px; }
.v { appearance: none; writing-mode: vertical-lr; direction: rtl; width: 22px; height: 122px; }
.s1 { background: linear-gradient(#eee 0 60%, #f07746 60%) 8px 0 / 5px 100% no-repeat; }
.s2 { background: linear-gradient(#eee 0 18%, #f07746 18%) 8px 0 / 5px 100% no-repeat; }
.v::-webkit-slider-thumb { appearance: none; width: 20px; height: 13px; background: url("data:image/svg+xml,%3Csvg xmlns='http://www.w3.org/2000/svg' width='20' height='13'%3E%3Cpath d='M5 .5h9l5 6-5 6H5Q.5 11.500.5 6.500T5 .5z' fill='%23f0efee' stroke='%238d8a86'/%3E%3Cpath d='M7.500 4v5M9.500 4v5M11.500 4v5' stroke='%23aaa'/%3E%3C/svg%3E") no-repeat; }
.h { appearance: none; width: 194px; height: 20px; background: linear-gradient(90deg, #f07746 0 11%, #eee 11%) 0 7px / 100% 5px no-repeat; }
.h::-webkit-slider-thumb { appearance: none; width: 13px; height: 20px; background: url("data:image/svg+xml,%3Csvg xmlns='http://www.w3.org/2000/svg' width='13' height='20'%3E%3Cpath d='M.5 5Q1.500.5 6.500.5T12.500 5v9l-6 5-6-5z' fill='%23f0efee' stroke='%238d8a86'/%3E%3Cpath d='M4 7.500h5M4 9.500h5M4 11.500h5' stroke='%23aaa'/%3E%3C/svg%3E") no-repeat; }
.row { display: flex; align-items: center; white-space: nowrap; }
.row label { display: flex; align-items: center; gap: 7px; }
.modes { height: 22px; margin: 8px 0 0 28px; }
.modes label + label { margin-left: 15px; }
.modes label + label + label { margin-left: 9px; }
.modes .filter.filter { margin: 0 9px 6px 1px; width: 78px; }
.modes .h { margin-top: 2px; }
.modes output { margin: 0 0 6px 3px; }
.curves { height: 26px; margin: 14px 0 0 36px; }
.curves .sel { width: 125px; height: 26px; margin: 0 6px 0 7px; }
.btn { height: 26px; width: 83px; border: 1px solid #a5a19b; border-radius: 4px; background: linear-gradient(#f2f2f2, #d6d6d6); display: flex; align-items: center; justify-content: center; gap: 2px; margin-right: 6px; }
.btn.save { width: 123px; }
.curves > label:first-child { width: 83px; }
.btn.flipb { margin: 0 12px 0 4px; }
.grid-lab.grid-lab { gap: 11px; }
.actions { margin: 14px 8px 0 20px; }
.actions .cancel { margin-left: auto; margin-right: 11px; }
.actions .ok { margin-right: 0; border-color: #b06a50; background: linear-gradient(#fbaf93, #f08a66); }
.pointer { position: absolute; left: 25px; top: 337px; }

.taskbar { flex: none; height: 15px; display: flex; gap: 2px; padding: 1px 1px 1px 1px; color: #fff; font: 10px/13px "DejaVu Sans Mono", monospace; white-space: nowrap; }
.ws { width: 15px; background: #333; text-align: center; }
.ws.active { background: #dcdcdc; color: #000; outline: 1px solid #000; }
.fill { flex: 1; background: #333; }
.info { background: #333; padding: 0 4px 0 4px; }
```

FILE: app.js
```js
// Time fields: one cell per digit, followed by the unit and a drop button.
document.querySelectorAll('.time').forEach(function (el) {
  el.innerHTML = el.dataset.v.split('').map(function (c) {
    return '<b' + (c === ',' ? ' class="sep"' : '') + '>' + c + '</b>';
  }).join('') + '<em>样本</em><button aria-label="格式"><svg width="9" height="6"><use href="#i-down"/></svg></button>';
});

// Ruler ticks.
var major = '', minor = '';
for (var t = 4.5; t < 842; t += 33) {
  major += 'M' + Math.floor(t) + '.5 199v4';
  minor += 'M' + Math.floor(t + 16) + '.5 201v2';
}
document.getElementById('major').setAttribute('d', major);
document.getElementById('minor').setAttribute('d', minor);

// Spectrogram: harmonic lines over stretched value noise.
var cv = document.getElementById('spectrum'), cx = cv.getContext('2d');
var W = cv.width, H = cv.height, img = cx.createImageData(W, H);
var stops = [[192, 192, 192], [77, 153, 255], [230, 26, 230], [255, 0, 0], [255, 255, 255]];
function hash(x, y) {
  var n = Math.sin(x * 127.1 + y * 311.7) * 43758.5453;
  return n - Math.floor(n);
}
function noise(x, y) {
  var i = Math.floor(x), j = Math.floor(y), u = x - i, v = y - j;
  u = u * u * (3 - 2 * u); v = v * v * (3 - 2 * v);
  return (hash(i, j) * (1 - u) + hash(i + 1, j) * u) * (1 - v) + (hash(i, j + 1) * (1 - u) + hash(i + 1, j + 1) * u) * v;
}
function curve(pts, y) {
  for (var i = 1; i < pts.length; i++) {
    if (y <= pts[i][0]) {
      var f = (y - pts[i - 1][0]) / (pts[i][0] - pts[i - 1][0]);
      return pts[i - 1][1] + f * (pts[i][1] - pts[i - 1][1]);
    }
  }
  return pts[pts.length - 1][1];
}
var leftBase = [[0, 0.34], [30, 0.36], [48, 0.33], [62, 0.25], [92, 0.24], [106, 0.34], [134, 0.40], [174, 0.39], [190, 0.30], [206, 0.26]];
var rightBase = [[0, 0.28], [30, 0.29], [78, 0.25], [98, 0.27], [112, 0.33], [160, 0.36], [190, 0.32], [206, 0.24]];
for (var y = 0; y < H; y++) {
  for (var x = 0; x < W; x++) {
    var left = x < 118, d = 205 - y, step = left ? 17 : 8.5;
    var k = Math.max(1, Math.round(d / step)), dist = Math.abs(d - k * step);
    var n = noise(x / 5, y / 2) - 0.5 + (noise(x / 2 + 90, y / 1.2) - 0.5) * 0.6;
    var v = curve(left ? leftBase : rightBase, y) + n * 0.2;
    if (left && x > 102 && y > 110) { v += 0.12; }
    if (!left && x > 130 && x < 152) { v += (y > 55 ? 0.24 : 0.1) * (1 - Math.abs(x - 141) / 11); }
    if (y > 110 && x > 206 && x < 224 && y < 126) { v += 0.18; }
    var peak = left ? (k <= 5 ? 0.79 : k <= 7 ? 0.53 : k <= 10 ? 0.47 : k === 11 ? 0.46 : 0) : (k <= 11 ? 0.76 : k <= 13 ? 0.5 : k <= 20 ? 0.43 : 0);
    if (left && k === 10) { peak = 0.54; }
    if (!left && x < 140 && k % 2) { peak *= 0.6; }
    if (!left && k === 20) { peak = 0.49; }
    if (peak > v) {
      var width = peak > 0.7 ? (left ? 5 : 4) : 2;
      v += (peak - v) * Math.exp(-dist * dist / width);
      if (k <= 8 && dist < 0.6 && noise(x / 60, k * 3) > 0.5) { v += 0.04; }
    }
    v = Math.min(v, 0.86);
    var env = 1;
    if (left) { env = Math.min(1, Math.max(0, (115 - x) / 6)); }
    else { env = Math.min(1, Math.max(0, (x - 123) / 8), Math.max(0, (512 - x) / 5)); }
    v = Math.max(0, Math.min(1, v * env)) * 4;
    if (y > 204) { v = 0; }
    var s = Math.min(3, Math.floor(v)), f = v - s, o = (y * W + x) * 4, sel = x >= 120;
    for (var c = 0; c < 3; c++) {
      var q = stops[s][c] + f * (stops[s + 1][c] - stops[s][c]);
      img.data[o + c] = sel ? q * (c === 2 ? 0.885 : 0.77) : q;
    }
    img.data[o + 3] = 255;
  }
}
cx.putImageData(img, 0, 0);
```
